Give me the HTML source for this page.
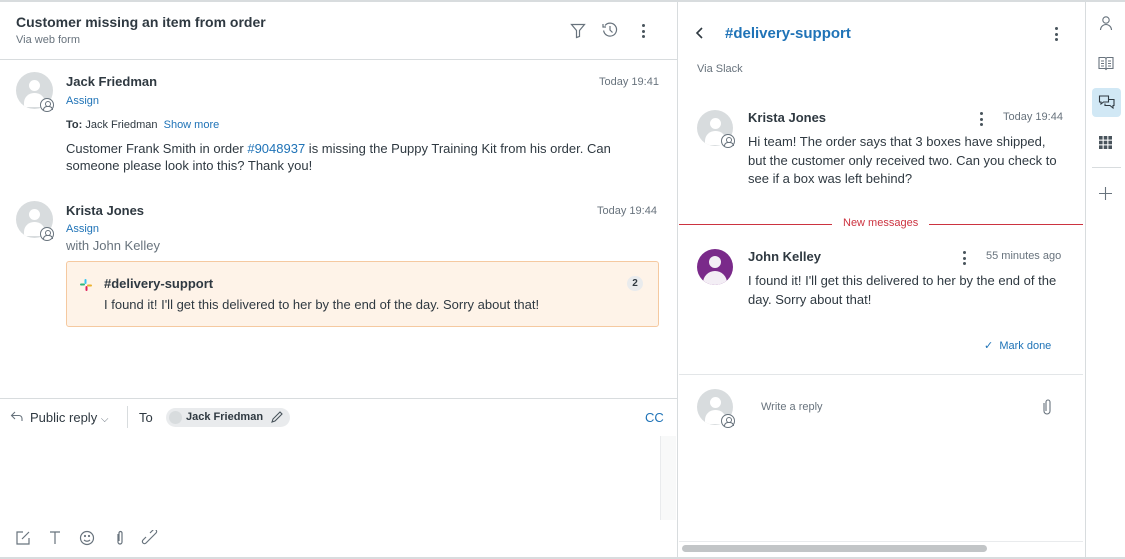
<!DOCTYPE html>
<html><head><meta charset="utf-8"><style>
*{box-sizing:border-box;margin:0;padding:0}
body{width:1125px;height:559px;overflow:hidden;background:#fff;font-family:"Liberation Sans",sans-serif;color:#2f3941;position:relative;font-size:13px}
.a{position:absolute}
.blue{color:#1f73b7}
.gray{color:#68737d}
.av{position:absolute;width:37px;height:37px;border-radius:50%;background:#d8dcde;overflow:hidden}
.av::before{content:"";position:absolute;left:13px;top:8px;width:11px;height:11px;border-radius:50%;background:#fff}
.av::after{content:"";position:absolute;left:8px;top:21px;width:21px;height:14px;border-radius:10px 10px 2px 2px;background:#fff}
.badge{position:absolute;width:14px;height:14px;border-radius:50%;background:#fff;border:1px solid #68737d}
.badge::before{content:"";position:absolute;left:3.5px;top:1.5px;width:4px;height:4px;border-radius:50%;border:1px solid #68737d}
.badge::after{content:"";position:absolute;left:2px;top:7px;width:8px;height:3px;border:1px solid #68737d;border-bottom:none;border-radius:4px 4px 0 0}
.dots{position:absolute;width:3px}
.dots i{display:block;width:3px;height:3px;border-radius:50%;background:#49545c;margin-bottom:2.5px}
</style></head><body>
<div class="a" style="left:0;top:0;width:1125px;height:2px;background:#d8dcde"></div>
<div class="a" style="left:677px;top:0;width:1px;height:559px;background:#d8dcde"></div>
<div class="a" style="left:1085px;top:0;width:1px;height:559px;background:#d8dcde"></div>
<div class="a" style="left:0;top:557px;width:1125px;height:2px;background:#d8dcde"></div>
<div class="a" style="left:0;top:59px;width:677px;height:1px;background:#d8dcde"></div>

<div class="a" style="left:16px;top:14px;font-size:14px;font-weight:bold;color:#2f3941">Customer missing an item from order</div>
<div class="a gray" style="left:16px;top:34px;font-size:11px">Via web form</div>
<svg class="a" style="left:570px;top:23px" width="16" height="16" viewBox="0 0 16 16" fill="none" stroke="#68737d" stroke-width="1.2"><path d="M1.5 1.5h13l-5 6v6l-3 1v-7z"/></svg>
<svg class="a" style="left:602px;top:22px" width="16" height="16" viewBox="0 0 16 16" fill="none" stroke="#68737d" stroke-width="1.2"><path d="M3 3.5A6.5 6.5 0 1 1 1.6 8.5M1 2v3h3M8 4v4l2.5 2.5"/></svg>
<div class="dots" style="left:642px;top:24px"><i></i><i></i><i></i></div>

<div class="av" style="left:16px;top:72px"></div><div class="badge" style="left:40px;top:98px"></div>
<div class="a" style="left:66px;top:74px;font-weight:bold">Jack Friedman</div>
<div class="a gray" style="left:599px;top:76px;font-size:11px">Today 19:41</div>
<div class="a blue" style="left:66px;top:95px;font-size:11px">Assign</div>
<div class="a" style="left:66px;top:119px;font-size:11px"><b>To:</b> Jack Friedman &nbsp;<span class="blue">Show more</span></div>
<div class="a" style="left:66px;top:141px;width:570px;line-height:16.5px">Customer Frank Smith in order <span class="blue">#9048937</span> is missing the Puppy Training Kit from his order. Can someone please look into this? Thank you!</div>

<div class="av" style="left:16px;top:201px"></div><div class="badge" style="left:40px;top:227px"></div>
<div class="a" style="left:66px;top:203px;font-weight:bold">Krista Jones</div>
<div class="a gray" style="left:597px;top:205px;font-size:11px">Today 19:44</div>
<div class="a blue" style="left:66px;top:223px;font-size:11px">Assign</div>
<div class="a gray" style="left:66px;top:238px">with John Kelley</div>
<div class="a" style="left:66px;top:261px;width:593px;height:66px;background:#fef3e8;border:1px solid #f5c9a0;border-radius:3px"></div>
<svg class="a" style="left:80px;top:279px" width="12" height="12" viewBox="0 0 12 12"><rect x="4.5" y="0" width="2" height="5" rx="1" fill="#36c5f0"/><rect x="0" y="4.5" width="5" height="2" rx="1" fill="#2eb67d"/><rect x="5.5" y="7" width="2" height="5" rx="1" fill="#e01e5a"/><rect x="7" y="5.5" width="5" height="2" rx="1" fill="#ecb22e"/></svg>
<div class="a" style="left:104px;top:276px;font-weight:bold">#delivery-support</div>
<div class="a" style="left:104px;top:297px">I found it! I'll get this delivered to her by the end of the day. Sorry about that!</div>
<div class="a" style="left:627px;top:276px;width:16px;height:15px;border-radius:8px;background:#e9ebed;font-size:10px;font-weight:bold;text-align:center;line-height:15px">2</div>

<div class="a" style="left:0;top:398px;width:677px;height:1px;background:#d8dcde"></div>
<svg class="a" style="left:10px;top:410px" width="14" height="12" viewBox="0 0 14 12" fill="none" stroke="#68737d" stroke-width="1.1"><path d="M5 2L1.5 5.5 5 9M1.5 5.5H9a3 3 0 0 1 3 3V11"/></svg>
<div class="a" style="left:30px;top:410px">Public reply <span class="gray" style="font-size:10px">⌵</span></div>
<div class="a" style="left:127px;top:406px;width:1px;height:22px;background:#d8dcde"></div>
<div class="a" style="left:139px;top:410px">To</div>
<div class="a" style="left:166px;top:408px;width:124px;height:19px;border-radius:10px;background:#e9ebed"></div>
<div class="a" style="left:169px;top:411px;width:13px;height:13px;border-radius:50%;background:#d8dcde"></div>
<div class="a" style="left:186px;top:411px;font-size:11px;font-weight:bold">Jack Friedman</div>
<svg class="a" style="left:270px;top:410px" width="14" height="14" viewBox="0 0 14 14" fill="none" stroke="#49545c" stroke-width="1.1"><path d="M2 12l1-3 7-7 2 2-7 7z"/></svg>
<div class="a blue" style="left:645px;top:410px">CC</div>
<div class="a" style="left:660px;top:436px;width:16px;height:84px;background:#f8f9f9;border-left:1px solid #e9ebed"></div>
<svg class="a" style="left:15px;top:530px" width="150" height="16" viewBox="0 0 150 16" fill="none" stroke="#68737d" stroke-width="1.2"><path d="M8 2H2v12h12V8M7 9l7-7"/><path d="M35 2h10M40 2v12"/><circle cx="72" cy="8" r="6.5"/><path d="M69 10q3 2.5 6 0"/><circle cx="70" cy="6" r=".5"/><circle cx="74" cy="6" r=".5"/><path d="M103 4v8a2 2 0 0 0 4 0V3a1.5 1.5 0 0 0-3 0v8"/><path d="M134 10l-3 3a2 2 0 0 1-3-3l3-3M138 6l3-3a2 2 0 0 0-3-3l-3 3M133 11l5-5"/></svg>

<!-- right panel -->
<svg class="a" style="left:695px;top:27px" width="10" height="12" viewBox="0 0 10 12" fill="none" stroke="#2f3941" stroke-width="1.6"><path d="M7 1L2 6l5 5"/></svg>
<div class="a blue" style="left:725px;top:25px;font-size:15px;font-weight:bold">#delivery-support</div>
<div class="dots" style="left:1055px;top:27px"><i></i><i></i><i></i></div>
<div class="a gray" style="left:697px;top:63px;font-size:11px">Via Slack</div>

<div class="av" style="left:697px;top:110px;width:36px;height:36px"></div><div class="badge" style="left:721px;top:134px"></div>
<div class="a" style="left:748px;top:110px;font-weight:bold">Krista Jones</div>
<div class="dots" style="left:980px;top:112px"><i></i><i></i><i></i></div>
<div class="a gray" style="left:1003px;top:111px;font-size:11px">Today 19:44</div>
<div class="a" style="left:748px;top:133px;width:310px;line-height:18.5px">Hi team! The order says that 3 boxes have shipped, but the customer only received two. Can you check to see if a box was left behind?</div>

<div class="a" style="left:679px;top:224px;width:153px;height:1px;background:#cc3340"></div>
<div class="a" style="left:929px;top:224px;width:154px;height:1px;background:#cc3340"></div>
<div class="a" style="left:843px;top:217px;font-size:11px;color:#cc3340">New messages</div>

<div class="a" style="left:697px;top:249px;width:36px;height:36px;border-radius:50%;background:#7a2a8a;overflow:hidden"><div class="a" style="left:12px;top:7px;width:12px;height:12px;border-radius:50%;background:#f3eef5"></div><div class="a" style="left:6px;top:22px;width:24px;height:16px;border-radius:12px 12px 0 0;background:#f3eef5"></div></div>
<div class="a" style="left:748px;top:249px;font-weight:bold">John Kelley</div>
<div class="dots" style="left:963px;top:251px"><i></i><i></i><i></i></div>
<div class="a gray" style="left:986px;top:250px;font-size:11px">55 minutes ago</div>
<div class="a" style="left:748px;top:272px;width:318px;line-height:18.5px">I found it! I'll get this delivered to her by the end of the day. Sorry about that!</div>
<div class="a blue" style="left:984px;top:339px;font-size:11px">✓&nbsp; Mark done</div>
<div class="a" style="left:679px;top:374px;width:404px;height:1px;background:#e3e6e8"></div>
<div class="av" style="left:697px;top:389px;width:36px;height:36px"></div><div class="badge" style="left:721px;top:414px"></div>
<div class="a gray" style="left:761px;top:401px;font-size:11px">Write a reply</div>
<svg class="a" style="left:1041px;top:399px" width="12" height="16" viewBox="0 0 12 16" fill="none" stroke="#68737d" stroke-width="1.1"><path d="M3 4v8a3 3 0 0 0 6 0V3a2 2 0 0 0-4 0v9"/></svg>
<div class="a" style="left:679px;top:541px;width:404px;height:1px;background:#e9ebed"></div>
<div class="a" style="left:682px;top:545px;width:305px;height:7px;border-radius:4px;background:#c2c5c7"></div>

<!-- sidebar -->
<svg class="a" style="left:1098px;top:15px" width="16" height="16" viewBox="0 0 16 16" fill="none" stroke="#68737d" stroke-width="1.1"><circle cx="8" cy="5" r="3.2"/><path d="M2.5 15a5.5 5.5 0 0 1 11 0"/></svg>
<svg class="a" style="left:1098px;top:55px" width="16" height="16" viewBox="0 0 16 16" fill="none" stroke="#68737d" stroke-width="1.1"><path d="M1 2.5h6l1 1 1-1h6v11H9l-1 1-1-1H1zM8 3.5v10M3 6h3M3 8.5h3M3 11h3M10 6h3M10 8.5h3M10 11h3"/></svg>
<div class="a" style="left:1092px;top:88px;width:29px;height:29px;border-radius:4px;background:#d1e8f5"></div>
<svg class="a" style="left:1098px;top:94px" width="17" height="17" viewBox="0 0 17 17" fill="none" stroke="#2f3941" stroke-width="1.1"><path d="M1.5 2h9v6h-5l-2.5 2V8h-1.5zM7 9.5v2h5l3 2.5v-2.5h1v-6h-5"/></svg>
<svg class="a" style="left:1099px;top:136px" width="13" height="13" viewBox="0 0 13 13" fill="#49545c"><rect x="0" y="0" width="3.6" height="3.6"/><rect x="4.7" y="0" width="3.6" height="3.6"/><rect x="9.4" y="0" width="3.6" height="3.6"/><rect x="0" y="4.7" width="3.6" height="3.6"/><rect x="4.7" y="4.7" width="3.6" height="3.6"/><rect x="9.4" y="4.7" width="3.6" height="3.6"/><rect x="0" y="9.4" width="3.6" height="3.6"/><rect x="4.7" y="9.4" width="3.6" height="3.6"/><rect x="9.4" y="9.4" width="3.6" height="3.6"/></svg>
<div class="a" style="left:1092px;top:167px;width:29px;height:1px;background:#d8dcde"></div>
<svg class="a" style="left:1099px;top:187px" width="13" height="13" viewBox="0 0 13 13" stroke="#68737d" stroke-width="1.1"><path d="M6.5 0v13M0 6.5h13"/></svg>
</body></html>
